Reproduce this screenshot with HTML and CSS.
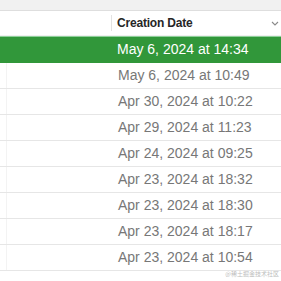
FILE: index.html
```html
<!DOCTYPE html>
<html lang="en">
<head>
  <meta charset="UTF-8" />
  <title>Creation Date</title>
  <link rel="stylesheet" href="styles.css">
</head>
<body>

<div class="toolbar"></div>

<div class="table">
  <!-- header -->
  <div class="head">
    <div class="col-left"></div>
    <div class="col-date">
      <span class="head-title">Creation Date</span>
      <span class="chevron">
        <svg width="8" height="5" viewBox="0 0 8 5"><path d="M1 1 L4 4 L7 1" fill="none" stroke="#8a8a8a" stroke-width="1.1"/></svg>
      </span>
    </div>
  </div>

  <div class="row selected"><div class="col-left"></div><div class="cell">May 6, 2024 at 14:34</div></div>
  <div class="row"><div class="col-left"></div><div class="cell">May 6, 2024 at 10:49</div></div>
  <div class="row"><div class="col-left"></div><div class="cell">Apr 30, 2024 at 10:22</div></div>
  <div class="row"><div class="col-left"></div><div class="cell">Apr 29, 2024 at 11:23</div></div>
  <div class="row"><div class="col-left"></div><div class="cell">Apr 24, 2024 at 09:25</div></div>
  <div class="row"><div class="col-left"></div><div class="cell">Apr 23, 2024 at 18:32</div></div>
  <div class="row"><div class="col-left"></div><div class="cell">Apr 23, 2024 at 18:30</div></div>
  <div class="row"><div class="col-left"></div><div class="cell">Apr 23, 2024 at 18:17</div></div>
  <div class="row"><div class="col-left"></div><div class="cell">Apr 23, 2024 at 10:54</div></div>
</div>

<div class="watermark">@稀土掘金技术社区</div>

</body>
</html>
```

FILE: styles.css
```css
body {
  margin: 0;
  width: 281px;
  height: 281px;
  overflow: hidden;
  background: #fff;
  font-family: "Liberation Sans", Arial, sans-serif;
  position: relative;
}
.toolbar {
  height: 10px;
  background: #f1f1f1;
  border-bottom: 1px solid #dedede;
}
.head {
  height: 24px;
  display: flex;
  align-items: center;
  border-bottom: 1px solid #f0f0f0;
}
.col-left {
  width: 111px;
  flex-shrink: 0;
  align-self: stretch;
}
.head .col-left {
  border-right: 1px solid #e2e2e2;
  margin: 4px 0;
}
.col-date {
  flex: 1;
  display: flex;
  align-items: center;
  justify-content: space-between;
  padding: 0 2px 0 5px;
}
.head-title {
  font-size: 12px;
  font-weight: bold;
  color: #262626;
  letter-spacing: -0.2px;
}
.chevron {
  display: flex;
  margin-top: 1px;
}
.row {
  height: 25px;
  display: flex;
  align-items: center;
  border-bottom: 1px solid #e6e6e6;
}
.row.selected {
  background: #31973a;
  border-bottom-color: #31973a;
  border-top: 1px solid #8fd09a;
  height: 25px;
}
.row .col-left {
  border-left: 1px solid #f3f3f3;
  margin-left: 6px;
  width: 105px;
}
.row.selected .col-left {
  border-left: none;
}
.cell {
  padding-left: 6px;
  font-size: 14px;
  color: #777;
  white-space: nowrap;
  margin-top: -1px;
}
.selected .cell {
  color: #fff;
}
.watermark {
  position: absolute;
  right: 2px;
  bottom: 3px;
  font-size: 6px;
  color: #bdbdbd;
  font-family: "Noto Sans CJK SC", sans-serif;
}
```
